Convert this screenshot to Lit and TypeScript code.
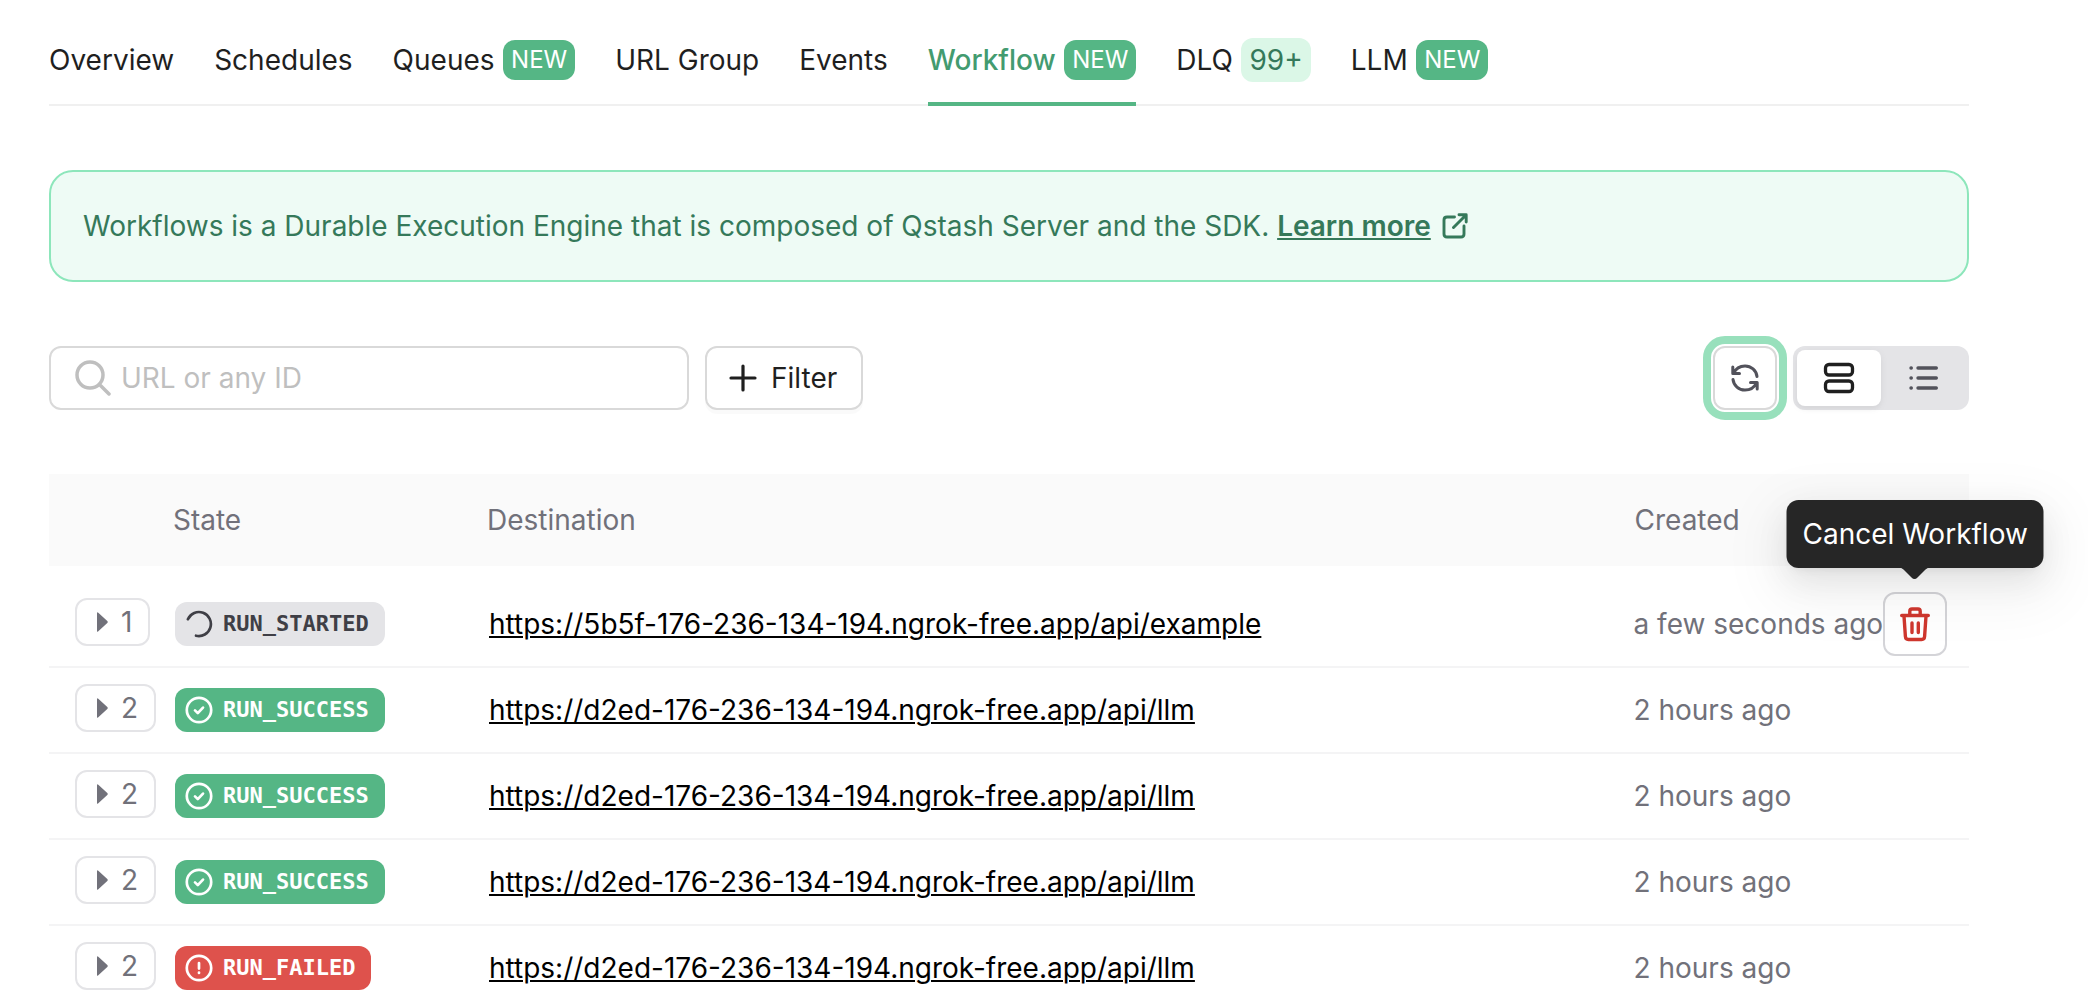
import { LitElement, html, css, svg, nothing } from "lit";
import { customElement } from "lit/decorators.js";
import { classMap } from "lit/directives/class-map.js";

type Tab = { label: string; badge?: string; count?: boolean; active?: boolean };
type Run = { steps: number; state: "STARTED" | "SUCCESS" | "FAILED"; url: string; created: string; cancel?: boolean };

const tabs: Tab[] = [
  { label: "Overview" },
  { label: "Schedules" },
  { label: "Queues", badge: "NEW" },
  { label: "URL Group" },
  { label: "Events" },
  { label: "Workflow", badge: "NEW", active: true },
  { label: "DLQ", badge: "99+", count: true },
  { label: "LLM", badge: "NEW" },
];

const llm = "https://d2ed-176-236-134-194.ngrok-free.app/api/llm";
const runs: Run[] = [
  { steps: 1, state: "STARTED", url: "https://5b5f-176-236-134-194.ngrok-free.app/api/example", created: "a few seconds ago", cancel: true },
  { steps: 2, state: "SUCCESS", url: llm, created: "2 hours ago" },
  { steps: 2, state: "SUCCESS", url: llm, created: "2 hours ago" },
  { steps: 2, state: "SUCCESS", url: llm, created: "2 hours ago" },
  { steps: 2, state: "FAILED", url: llm, created: "2 hours ago" },
];

const stateIcon = {
  STARTED: svg`<path d="M2.9 9.2A12 12 0 1 1 11 25.7"/>`,
  SUCCESS: svg`<circle cx="14" cy="14" r="12.2"/><path d="M10 14.4l2.8 2.7 5.2-5.5"/>`,
  FAILED: svg`<circle cx="14" cy="14" r="12.2"/><path d="M14 9v5.6M14 18.6v.3"/>`,
};

@customElement("app-root")
export class AppRoot extends LitElement {
  static styles = css`
    :host {
      display: block;
      box-sizing: border-box;
      height: 1008px;
      padding: 0 119px 0 49px;
      overflow: hidden;
      background: #fff;
      color: #1f1f1f;
      font: 400 28px/44px Inter, "Liberation Sans", sans-serif;
    }
    * { box-sizing: border-box; }
    svg { display: block; fill: none; stroke: currentColor; stroke-width: 2; stroke-linecap: round; stroke-linejoin: round; flex: none; }
    .tabs { display: flex; gap: 40px; height: 106px; padding-top: 14px; border-bottom: 2px solid #f0f0f0; }
    .tab { display: flex; align-items: center; gap: 8.5px; height: 92px; padding-top: 4px; border-bottom: 4px solid transparent; white-space: nowrap; }
    .tab.active { color: #439b70; border-color: #55b685; font-weight: 500; }
    .badge { height: 40px; padding: 0 8px; border-radius: 12px; background: #55b685; color: #fff; font-size: 24px; line-height: 39px; font-weight: 400; }
    .badge.count { height: 44px; line-height: 44px; font-size: 28px; background: #dbf7e7; color: #35795a; }
    .banner { display: flex; align-items: center; height: 112px; margin-top: 64px; padding: 0 32px; border: 2px solid #8de6bb; border-radius: 24px; background: #eefbf5; color: #35795a; white-space: pre; }
    .more { font-weight: 600; text-decoration: underline; text-decoration-thickness: 2px; text-underline-offset: 2px; }
    .banner svg { margin-left: 11px; }
    .toolbar { display: flex; height: 64px; margin-top: 64px; }
    .box { display: flex; align-items: center; border: 2px solid #d9d9d9; border-radius: 12px; }
    .search { width: 640px; padding-left: 24px; gap: 10px; color: #bfbfbf; }
    .filter { width: 158px; margin-left: 16px; padding-left: 22px; gap: 14px; box-shadow: 0 4px 0 rgba(0, 0, 0, .02); }
    .refresh { width: 64px; margin-left: auto; justify-content: center; color: #52525b; outline: 8px solid #98e0bc; outline-offset: 2px; }
    .views { display: flex; width: 176px; margin-left: 16px; padding: 4px; border-radius: 12px; background: #e4e4e7; }
    .view { display: flex; flex: 1; align-items: center; justify-content: center; border-radius: 8px; color: #52525b; }
    .view.on { background: #fff; color: #1f1f1f; box-shadow: 0 2px 8px rgba(0, 0, 0, .06), 0 4px 4px rgba(0, 0, 0, .02); }
    .row { display: grid; grid-template-columns: 100px 314px 1144.5px 1fr; align-items: center; height: 86px; padding-left: 26px; border-bottom: 2px solid #f4f4f5; color: #71717a; white-space: nowrap; }
    .head { height: 92px; margin: 64px 0 16px; border: 0; background: #fafafa; }
    .head .st { margin-left: -2px; }
    .head .de { margin-left: -2px; }
    .head .cr { margin-left: 1px; }
    .row:last-child { border-color: transparent; }
    .expand { display: flex; align-items: center; gap: 13px; width: max-content; height: 48px; margin-bottom: 4px; padding: 0 16px 0 20px; border: 2px solid #e4e4e7; border-radius: 12px; }
    .expand svg { fill: currentColor; stroke: none; }
    .pill { display: flex; align-items: center; gap: 10px; width: max-content; height: 44px; padding: 0 16px 0 10px; border-radius: 12px; color: #fff; font: 700 22px/44px "DejaVu Sans Mono", monospace; }
    .STARTED { background: #e4e4e7; color: #3f3f46; }
    .SUCCESS { background: #55b685; }
    .FAILED { background: #de524c; }
    .pill svg { stroke-width: 2.7; }
    .url { color: #000; text-decoration: underline; text-decoration-thickness: 2px; text-underline-offset: 2px; }
    .created { display: flex; align-items: center; }
    .cancel { position: relative; display: flex; flex: none; align-items: center; justify-content: center; width: 64px; height: 64px; border: 2px solid #d4d4d8; border-radius: 12px; color: #cf372e; }
    .tip { position: absolute; left: 50%; bottom: 86px; transform: translateX(-50%); width: 257px; height: 68px; border-radius: 12px; background: #262626; color: #fff; line-height: 68px; text-align: center; box-shadow: 0 12px 32px rgba(0, 0, 0, .08), 0 6px 12px -8px rgba(0, 0, 0, .12), 0 18px 56px 16px rgba(0, 0, 0, .05); }
    .tip svg { position: absolute; left: 112px; top: 67px; fill: #262626; stroke: none; }
  `;

  private renderRun(r: Run) {
    return html`<div class="row">
      <div class="expand"><svg width="11" height="20" viewBox="0 0 11 20"><path d="M0 1.2Q0-.6 1.3.8L10.3 9Q11.2 10 10.3 11L1.3 19.2Q0 20.4 0 18.8Z"/></svg><span>${r.steps}</span></div>
      <div class="pill ${r.state}"><svg width="28" height="28" viewBox="0 0 28 28">${stateIcon[r.state]}</svg><span>RUN_${r.state}</span></div>
      <div><a class="url">${r.url}</a></div>
      <div class="created"><span>${r.created}</span>${r.cancel
        ? html`<div class="cancel">
            <svg width="32" height="36" viewBox="0 0 32 36"><path stroke-width="3.400" d="M2.700 9.500h26.600M5 10l1.400 20.500q.2 3 3 3h13.200q2.800 0 3-3L27 10M10.800 9V5.200q0-2.200 2.200-2.200h6q2.200 0 2.200 2.200V9M13 17v9.500M19.300 17v9.500"/></svg>
            <div class="tip">Cancel Workflow<svg width="32" height="12" viewBox="0 0 32 12"><path d="M0 0Q3 .5 5 2.500L13 10.500Q16 13.500 19 10.500L27 2.500Q29 .5 32 0Z"/></svg></div>
          </div>`
        : nothing}</div>
    </div>`;
  }

  render() {
    return html`
      <nav class="tabs">${tabs.map(t => html`<div class=${classMap({ tab: true, active: !!t.active })}><span>${t.label}</span>${t.badge
        ? html`<span class=${classMap({ badge: true, count: !!t.count })}>${t.badge}</span>` : nothing}</div>`)}</nav>
      <div class="banner"><span>Workflows is a Durable Execution Engine that is composed of Qstash Server and the SDK. </span><a class="more">Learn more</a><svg width="26" height="26" viewBox="0 0 26 26"><path stroke-width="2.900" d="M12.500 4H5Q2 4 2 7v14q0 3 3 3h14q3 0 3-3v-8M11.500 14.500L24 2M17 1.800h7.200V9"/></svg></div>
      <div class="toolbar">
        <div class="box search"><svg width="36" height="36" viewBox="0 0 36 36"><path stroke-width="3.500" d="M28 15a13 13 0 1 1-26 0a13 13 0 1 1 26 0M24.500 24.500L34 34"/></svg><span>URL or any ID</span></div>
        <div class="box filter"><svg width="28" height="28" viewBox="0 0 28 28"><path stroke-width="3.200" d="M14 2v24M2 14h24"/></svg><span>Filter</span></div>
        <div class="box refresh"><svg width="28" height="28" viewBox="0 0 28 28"><path stroke-width="3" d="M1.800 3v6.500h6.700M2.500 9.200Q6 2 14 1.900A12 12 0 0 1 26 12.500M26.200 25v-6.500h-6.700M25.500 18.800Q22 26 14 26.100A12 12 0 0 1 2 15.500"/></svg></div>
        <div class="views">
          <div class="view on"><svg width="32" height="32" viewBox="0 0 32 32"><rect x="2.500" y="2.500" width="27" height="10.500" rx="3.500" stroke-width="3.300"/><rect x="2.500" y="19" width="27" height="10.500" rx="3.500" stroke-width="3.300"/></svg></div>
          <div class="view"><svg width="30" height="28" viewBox="0 0 30 28"><path stroke-width="3.400" d="M10 4h18.300M10 14h18.300M10 24h18.300M3 4h.3M3 14h.3M3 24h.3"/></svg></div>
        </div>
      </div>
      <div class="row head"><span></span><span class="st">State</span><span class="de">Destination</span><span class="cr">Created</span></div>
      <div class="rows">${runs.map(r => this.renderRun(r))}</div>`;
  }
}
